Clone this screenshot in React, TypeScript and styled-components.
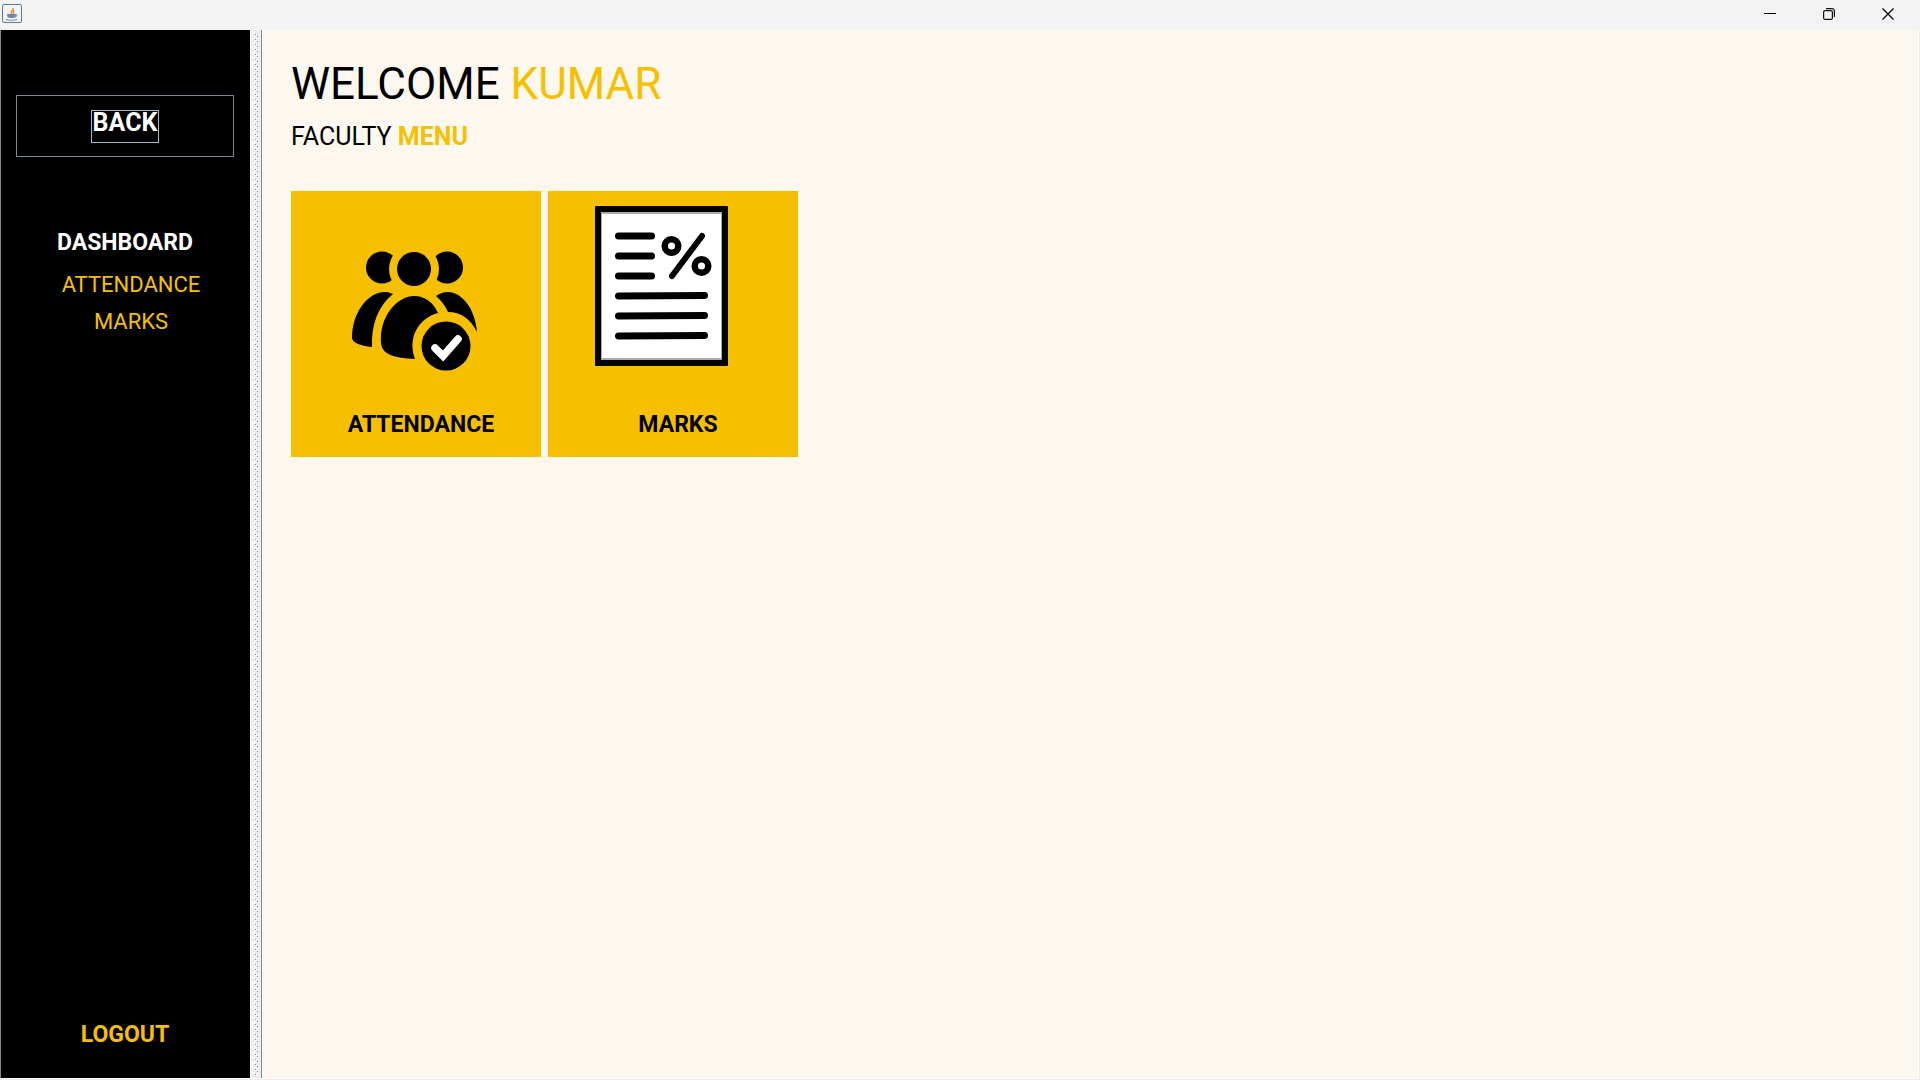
import React from "react";
import styled, { createGlobalStyle } from "styled-components";

const GlobalStyle = createGlobalStyle`
  *, *::before, *::after { box-sizing: border-box; }
  body { margin: 0; background: #eeeeee; }
  button { font: inherit; border: 0; padding: 0; margin: 0; background: none; cursor: pointer; }
`;

const Window = styled.div`
  display: flex;
  flex-direction: column;
  height: 100vh;
  font-family: Roboto, "Liberation Sans", sans-serif;
  color: #000;
`;

const TitleBar = styled.header`
  display: flex;
  justify-content: space-between;
  height: 30px;
  flex: none;
  padding-left: 2px;
  background: #f3f3f3;
`;

const JavaIcon = styled.svg`
  width: 20px;
  height: 20px;
  margin-top: 4px;
`;

const WindowControls = styled.div`
  display: flex;
  padding-right: 3px;
`;

const ControlButton = styled.button`
  display: grid;
  place-items: center;
  width: 59px;
  height: 28px;
`;

const SplitPane = styled.div`
  display: flex;
  flex: 1;
  min-height: 0;
  margin: 0 1px 1px 0;
  border: solid #fff;
  border-width: 0 1px 1px 0;
`;

const Sidebar = styled.aside`
  display: flex;
  flex-direction: column;
  width: 250px;
  flex: none;
  padding: 65px 16px 23px 15px;
  border-left: 1px solid #7a8a99;
  background: #000;
`;

const BackButton = styled.button`
  display: flex;
  justify-content: center;
  align-items: center;
  height: 62px;
  flex: none;
  border: 1px solid #7a8a99;
  color: #fff;
`;

const FocusRing = styled.span`
  height: 33px;
  padding: 0 1px;
  border: 1px solid #a3b8cc;
  font-size: 25px;
  font-weight: 700;
  line-height: 24px;
`;

const Menu = styled.nav`
  display: flex;
  flex-direction: column;
  align-items: center;
  margin-top: 69px;
`;

const MenuHeading = styled.button`
  height: 34px;
  font-size: 23px;
  font-weight: 700;
  line-height: 34px;
  color: #fff;
`;

const MenuList = styled.div`
  display: flex;
  flex-direction: column;
  align-items: center;
  margin-top: 6px;
  padding-left: 12px;
`;

const MenuItem = styled.button`
  height: 37px;
  font-size: 22px;
  line-height: 37px;
  color: #f6c000;
`;

const LogoutButton = styled.button`
  margin-top: auto;
  align-self: center;
  font-size: 23px;
  font-weight: 700;
  line-height: 40px;
  color: #f6c000;
`;

const Divider = styled.div`
  display: flex;
  width: 12px;
  flex: none;
  padding: 2px 0 2px 2px;
  border-left: 1px solid #fff;
  border-right: 1px solid #7a8a99;
  background: #eeeeee;
`;

const Content = styled.main`
  flex: 1;
  min-width: 0;
  padding: 31px 29px;
  background: #fdf8ef;
`;

const Title = styled.h1`
  margin: 0;
  font-size: 44px;
  font-weight: 400;
  line-height: 46px;
`;

const Subtitle = styled.h2`
  margin: 16px 0 0;
  font-size: 25px;
  font-weight: 400;
  line-height: 28px;
`;

const Accent = styled.span<{ $bold?: boolean }>`
  color: #f6c000;
  font-weight: ${(p) => (p.$bold ? 700 : "inherit")};
`;

const Cards = styled.div`
  display: flex;
  flex-wrap: wrap;
  gap: 7px;
  margin-top: 40px;
`;

const Card = styled.button`
  display: flex;
  flex-direction: column;
  align-items: center;
  width: 250px;
  height: 266px;
  background: #f6c000;
`;

const Art = styled.svg`
  width: 250px;
  height: 215px;
`;

const CardLabel = styled.span`
  padding-left: 10px;
  font-size: 23px;
  font-weight: 700;
  line-height: 38px;
`;

const Bumps = () => (
  <svg width="7" height="100%" aria-hidden="true">
    <defs>
      <pattern id="bumps" width="7" height="5" patternUnits="userSpaceOnUse">
        <path fill="#fff" d="M0 0h2v2h-2zM2 3h2v1h-2z" />
        <path fill="#7a8a99" d="M2 2h1v1h-1zM4 4h1v1h-1z" />
      </pattern>
    </defs>
    <rect width="7" height="100%" fill="url(#bumps)" />
  </svg>
);

const AttendanceArt = () => (
  <Art viewBox="0 0 250 215" aria-hidden="true">
    <circle cx="91" cy="76.500" r="16" />
    <circle cx="156" cy="76.500" r="16" />
    <circle cx="123" cy="78" r="25" fill="#f6c000" />
    <circle cx="123" cy="78" r="17" />
    <path d="M102 103C84 94 61 116 61 147Q62 154 81 156C80 134 87 115 102 103Z" />
    <path d="M145 105C163 92 184 112 186 141Q176 121 157 121Q153 112 145 105Z" />
    <path d="M90 152C88 126 106 105 123 105C134 105 143 112 147 122C128 127 116 146 124 168C102 167 91 163 90 152Z" />
    <circle cx="155" cy="155" r="24.500" />
    <path d="M144 157l8 8 15-17" fill="none" stroke="#fff" strokeWidth="7.500" strokeLinecap="round" />
  </Art>
);

const MarksArt = () => (
  <Art viewBox="0 0 250 215" aria-hidden="true">
    <rect x="47" y="15" width="133" height="160" rx="1" />
    <rect x="53" y="21" width="121" height="148" fill="#aaa" />
    <rect x="54" y="23" width="119" height="144" fill="#fff" />
    <path
      d="M70.500 45h33M70.500 65h33M70.500 85h33M70.500 105l86-.5M70.500 125l86-.5M70.500 145l86-.5"
      stroke="#000" strokeWidth="7" strokeLinecap="round"
    />
    <path d="M154 45L124 85" stroke="#000" strokeWidth="6" strokeLinecap="round" />
    <circle cx="123.500" cy="55" r="6.800" fill="#fff" stroke="#000" strokeWidth="6.500" />
    <circle cx="153.500" cy="75" r="6.800" fill="#fff" stroke="#000" strokeWidth="6.500" />
  </Art>
);

export default function App() {
  return (
    <Window>
      <GlobalStyle />
      <TitleBar>
        <JavaIcon viewBox="0 0 20 20" aria-hidden="true">
          <rect x=".5" y=".5" width="19" height="18" rx="1.500" fill="#f3f3f3" stroke="#5b7a94" />
          <path d="M10 10c-3-3 2-3 1-6M11 10c2-2-1-2 1-4" fill="none" stroke="#ee8a3c" strokeWidth="1.400" />
          <path d="M5 10h9c0 3-1 4-3 4H8c-2 0-3-1-3-4z" fill="#6f8ba6" />
          <path d="M14 10.500c2 0 1 2-1 2.500M4 15.500c3 1 8 1 11 0" fill="none" stroke="#6f8ba6" />
        </JavaIcon>
        <WindowControls>
          <ControlButton aria-label="Minimize">
            <svg width="12" height="12"><path d="M0 5.500h12" stroke="#000" /></svg>
          </ControlButton>
          <ControlButton aria-label="Restore">
            <svg width="12" height="12" fill="none" stroke="#111">
              <rect x=".6" y="2.600" width="8.800" height="8.800" rx="1.500" strokeWidth="1.200" />
              <path d="M3 .6h6a2.400 2.400 0 0 1 2.400 2.400v6" strokeWidth="1.200" />
            </svg>
          </ControlButton>
          <ControlButton aria-label="Close">
            <svg width="12" height="12"><path d="M.5.5l11 11M11.500.5l-11 11" stroke="#000" strokeWidth="1.200" /></svg>
          </ControlButton>
        </WindowControls>
      </TitleBar>
      <SplitPane>
        <Sidebar>
          <BackButton><FocusRing>BACK</FocusRing></BackButton>
          <Menu>
            <MenuHeading>DASHBOARD</MenuHeading>
            <MenuList>
              <MenuItem>ATTENDANCE</MenuItem>
              <MenuItem>MARKS</MenuItem>
            </MenuList>
          </Menu>
          <LogoutButton>LOGOUT</LogoutButton>
        </Sidebar>
        <Divider><Bumps /></Divider>
        <Content>
          <Title>WELCOME <Accent>KUMAR</Accent></Title>
          <Subtitle>FACULTY <Accent $bold>MENU</Accent></Subtitle>
          <Cards>
            <Card><AttendanceArt /><CardLabel>ATTENDANCE</CardLabel></Card>
            <Card><MarksArt /><CardLabel>MARKS</CardLabel></Card>
          </Cards>
        </Content>
      </SplitPane>
    </Window>
  );
}
